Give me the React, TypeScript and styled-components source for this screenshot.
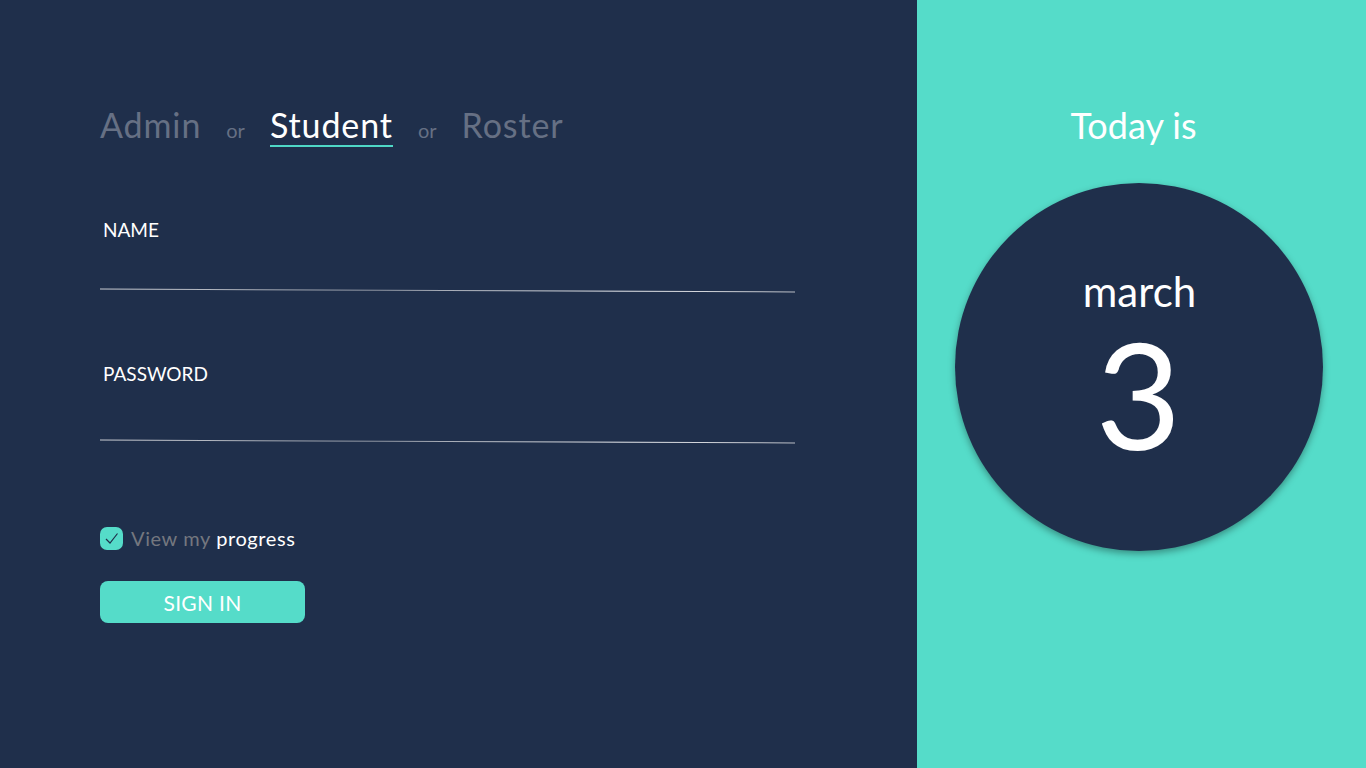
import React from "react";
import styled, { createGlobalStyle } from "styled-components";

const Global = createGlobalStyle`
  html, body { margin: 0; padding: 0; }
  body { font-family: Lato, "Noto Sans", sans-serif; }
  * { box-sizing: border-box; }
`;

const Page = styled.div`
  display: flex;
  width: 1366px;
  height: 768px;
  overflow: hidden;
`;

const Left = styled.div`
  width: 917px;
  background: #1f2f4b;
  padding: 105px 0 0 100px;
  display: flex;
  flex-direction: column;
`;

const Tabs = styled.div`
  display: flex;
  align-items: baseline;
  gap: 25px;
  height: 45px;
`;

const Tab = styled.span<{ $active?: boolean }>`
  font-size: 34px;
  font-weight: 400;
  letter-spacing: 0.9px;
  color: ${(p) => (p.$active ? "#ffffff" : "#667084")};
  border-bottom: 2px solid ${(p) => (p.$active ? "#4fd8c6" : "transparent")};
  line-height: 40px;
`;

const Or = styled.span`
  font-size: 20px;
  color: #667084;
`;

const Form = styled.div`
  width: 695px;
  display: flex;
  flex-direction: column;
  margin-top: 67px;
`;

const Field = styled.div<{ $gap: number }>`
  display: flex;
  flex-direction: column;
  margin-bottom: ${(p) => p.$gap}px;
`;

const Label = styled.label`
  font-size: 19px;
  color: #ffffff;
  padding-left: 3px;
  line-height: 26px;
`;

const Input = styled.input<{ $h: number }>`
  background: transparent;
  border: none;
  outline: none;
  height: ${(p) => p.$h}px;
  color: #fff;
  font-size: 18px;
  font-family: inherit;
`;

const Line = styled.div`
  height: 1px;
  background: linear-gradient(90deg, #c9ccd2, #8e95a2 40%, #e6e8ec 75%, #b8bcc4);
  transform: rotate(0.24deg);
`;

const CheckRow = styled.label`
  display: flex;
  align-items: center;
  gap: 8px;
  margin-top: 84px;
  font-size: 20px;
  letter-spacing: 0.6px;
  color: #74777f;
`;

const Box = styled.span`
  width: 23px;
  height: 23px;
  border-radius: 7px;
  background: #55dcc9;
  display: flex;
  align-items: center;
  justify-content: center;
`;

const Strong = styled.span`
  color: #ffffff;
`;

const Button = styled.button`
  margin-top: 31px;
  width: 205px;
  height: 42px;
  border: none;
  border-radius: 8px;
  background: #55dcc9;
  color: #ffffff;
  font-family: inherit;
  font-size: 21px;
  letter-spacing: 0.3px;
  cursor: pointer;
`;

const Right = styled.div`
  flex: 1;
  background: #55dcc9;
  display: flex;
  flex-direction: column;
  align-items: center;
  padding-top: 102px;
`;

const Today = styled.div`
  font-size: 36px;
  color: #ffffff;
  line-height: 46px;
  margin-right: 16px;
`;

const Circle = styled.div`
  margin-top: 35px;
  margin-right: 6px;
  width: 368px;
  height: 368px;
  border-radius: 50%;
  background: #1f2f4b;
  box-shadow: 0 3px 7px rgba(0, 0, 0, 0.35);
  display: flex;
  flex-direction: column;
  align-items: center;
  padding-top: 82px;
`;

const Month = styled.div`
  font-size: 42px;
  color: #ffffff;
  line-height: 52px;
  margin-left: 2px;
`;

const Day = styled.div`
  font-size: 148px;
  font-weight: 400;
  color: #ffffff;
  line-height: 124px;
  margin-top: 14px;
`;

export default function App() {
  return (
    <Page>
      <Global />
      <Left>
        <Tabs>
          <Tab>Admin</Tab>
          <Or>or</Or>
          <Tab $active>Student</Tab>
          <Or>or</Or>
          <Tab>Roster</Tab>
        </Tabs>
        <Form>
          <Field $gap={70}>
            <Label>NAME</Label>
            <Input type="text" $h={47} />
            <Line />
          </Field>
          <Field $gap={0}>
            <Label>PASSWORD</Label>
            <Input type="password" $h={54} />
            <Line />
          </Field>
          <CheckRow>
            <Box>
              <svg width="15" height="13" viewBox="0 0 15 13">
                <path d="M2 7 L6 11 L13.5 1.5" fill="none" stroke="#1f2f4b" strokeWidth="1.2" />
              </svg>
            </Box>
            <span>
              View my <Strong>progress</Strong>
            </span>
          </CheckRow>
          <Button>SIGN IN</Button>
        </Form>
      </Left>
      <Right>
        <Today>Today is</Today>
        <Circle>
          <Month>march</Month>
          <Day>3</Day>
        </Circle>
      </Right>
    </Page>
  );
}
